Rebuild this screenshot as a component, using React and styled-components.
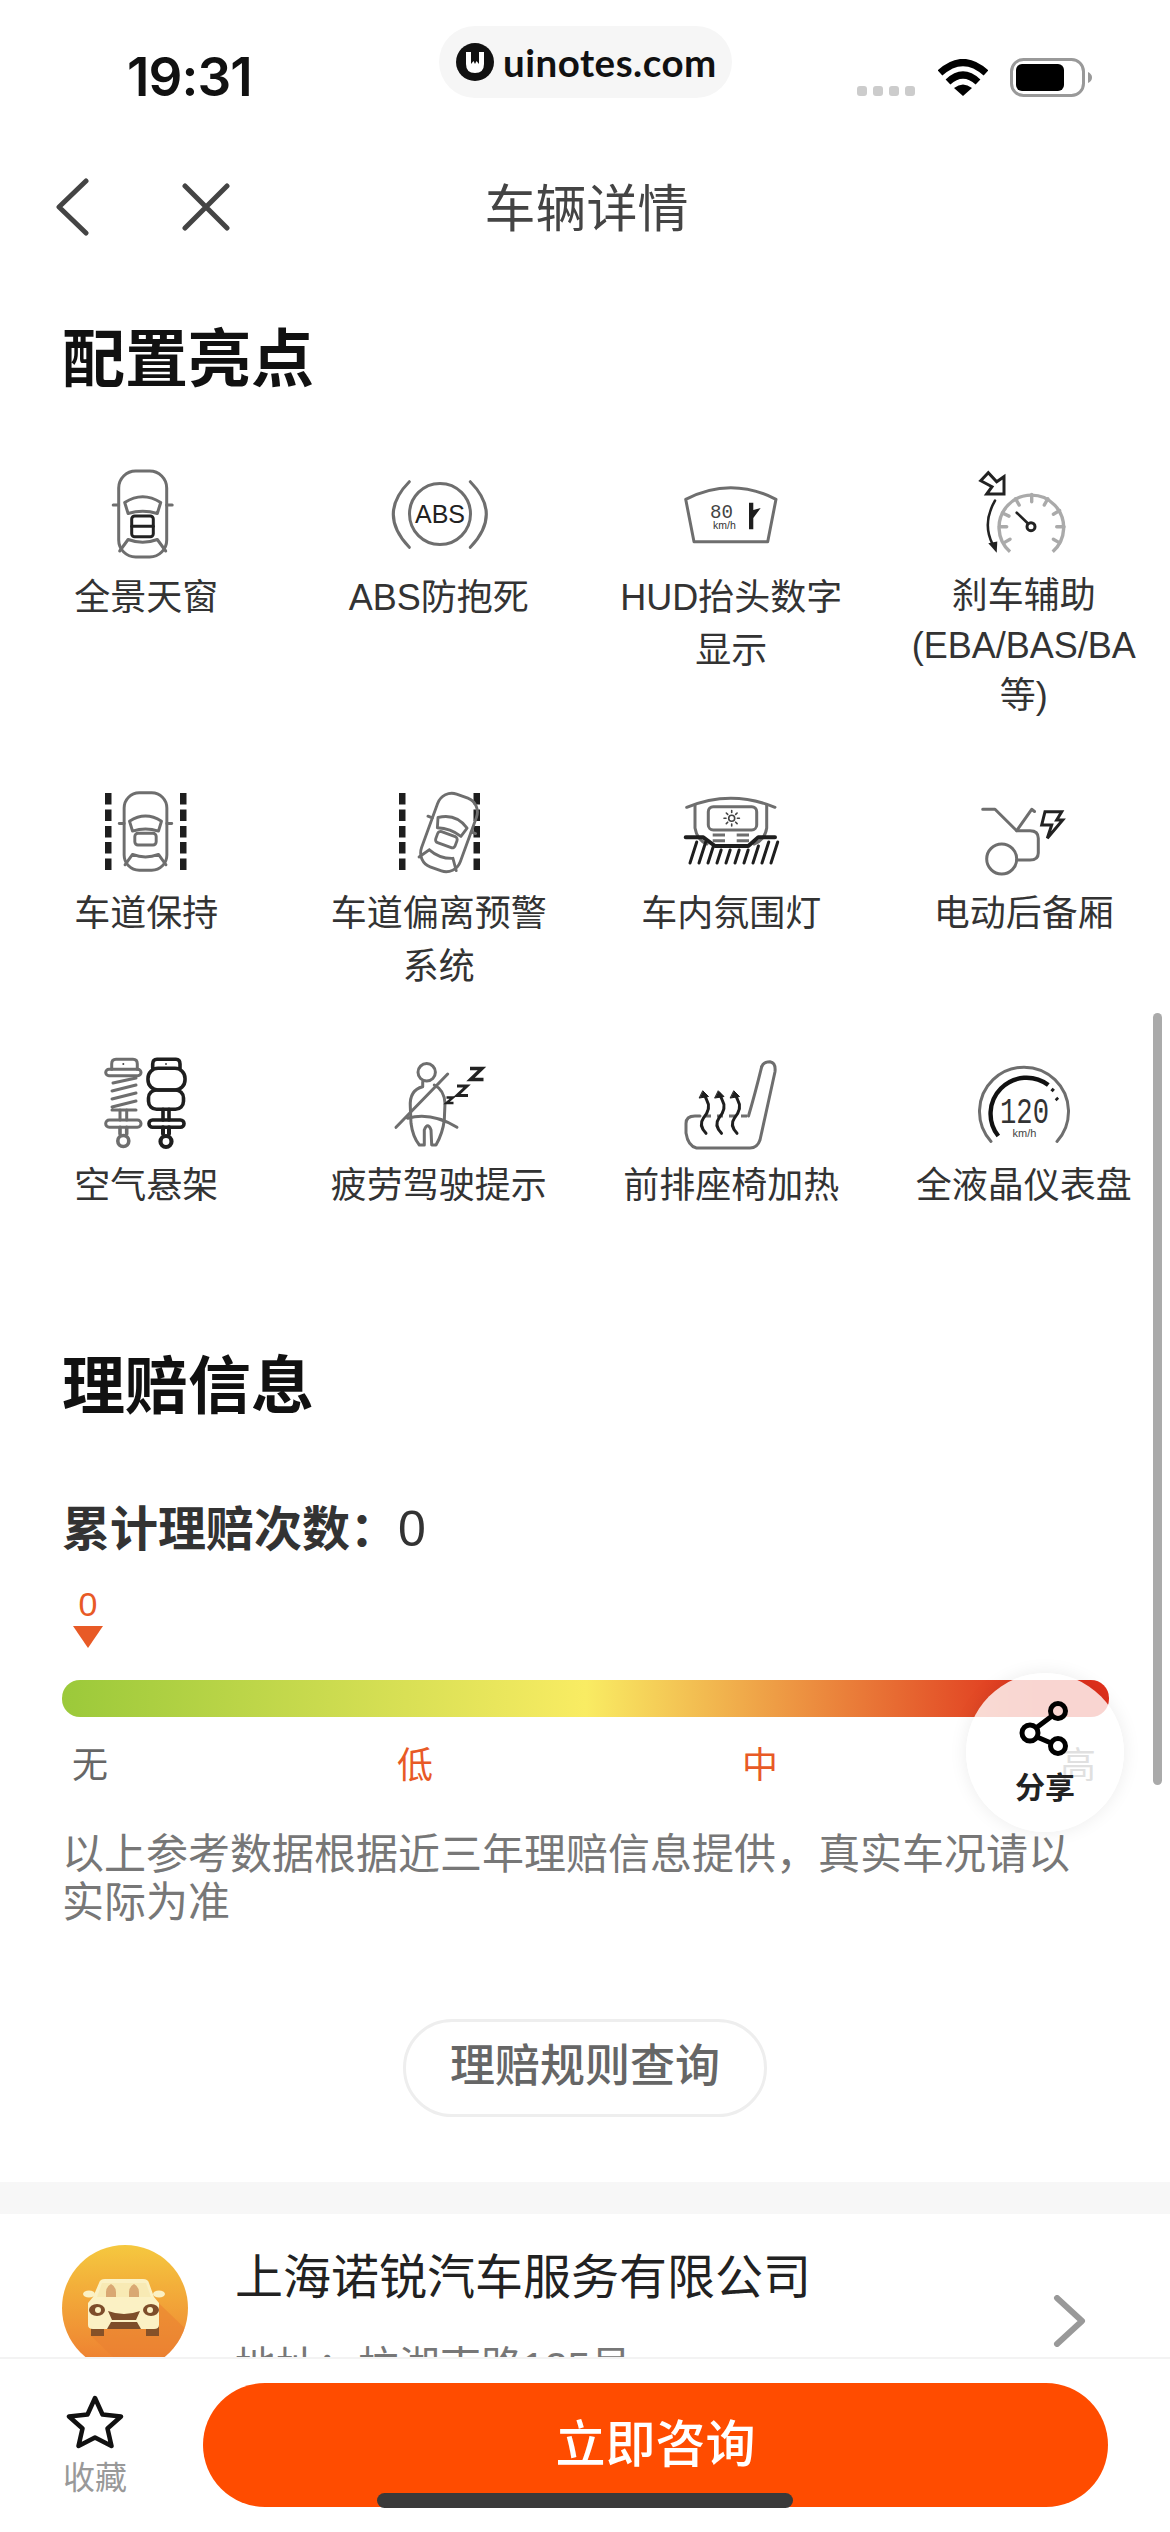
import React from "react";
import styled, { createGlobalStyle } from "styled-components";

const SANS = `"Liberation Sans", "Noto Sans CJK SC", sans-serif`;
const GRAY = "#6e6e6e";
const DARK = "#222222";
const ORANGE = "#e85a26";

const Global = createGlobalStyle`
  html, body { margin: 0; padding: 0; background: #fff; }
  body { font-family: ${SANS}; }
  * { box-sizing: border-box; }
`;

const Page = styled.div`
  position: relative;
  width: 1170px;
  height: 2532px;
  overflow: hidden;
  background: #fff;
  color: #333;
`;

/* status bar */
const StatusBar = styled.div`
  display: flex;
  align-items: flex-start;
  height: 150px;
  padding-left: 127px;
`;
const Time = styled.div`
  width: 126px;
  margin-top: 50px;
  font: 600 53px/54px Inter, sans-serif;
  letter-spacing: -0.9px;
  white-space: nowrap;
  color: #111;
`;
const Pill = styled.div`
  display: flex;
  align-items: center;
  gap: 9px;
  width: 293px;
  height: 72px;
  margin: 26px 0 0 186px;
  padding-left: 17px;
  border-radius: 36px;
  background: #f6f6f6;
`;
const PillText = styled.span`
  font: 700 38.5px/40px Lato, sans-serif;
  letter-spacing: 0.5px;
  color: #111;
`;
const Signal = styled.div`
  display: flex;
  gap: 6px;
  margin: 86px 0 0 125px;
`;
const SignalDot = styled.i`
  display: block;
  width: 10px;
  height: 10px;
  border-radius: 3px;
  background: #cccccc;
`;
const Wifi = styled.svg`
  margin: 59px 0 0 23px;
`;
const Battery = styled.svg`
  margin: 58px 0 0 22px;
`;

/* nav */
const NavBar = styled.div`
  display: grid;
  grid-template-columns: 1fr auto 1fr;
  align-items: center;
  height: 114px;
`;
const NavLeft = styled.div`
  display: flex;
  align-items: center;
  gap: 92px;
  padding-left: 54px;
`;
const NavTitle = styled.div`
  padding: 5px 0 0 3px;
  font-size: 51px;
  line-height: 60px;
  color: #444;
`;

/* sections */
const SectionTitle = styled.h2`
  margin: ${(p) => p.$top}px 0 0 62px;
  font-size: 63px;
  line-height: 80px;
  font-weight: 700;
  color: #111;
`;
const FeatureGrid = styled.div`
  display: grid;
  grid-template-columns: repeat(4, 1fr);
  row-gap: 65px;
  margin-top: 71px;
`;
const Feature = styled.div`
  display: flex;
  flex-direction: column;
  align-items: center;
`;
const IconSvg = styled.svg`
  display: block;
  overflow: visible;
  fill: none;
  stroke: ${GRAY};
  stroke-width: 3;
  stroke-linecap: round;
  stroke-linejoin: round;
`;
const FeatureLabel = styled.div`
  width: 240px;
  margin-top: 11px;
  font-size: 36px;
  line-height: ${(p) => (p.$tight ? 50 : 53)}px;
  text-align: center;
  color: #333;
`;
const Count = styled.div`
  margin: 73px 0 0 62px;
  font-size: 48px;
  line-height: 60px;
  font-weight: 700;
  color: #333;
`;
const CountValue = styled.span`
  font-size: 50px;
  font-weight: 400;
`;
const Marker = styled.div`
  display: flex;
  flex-direction: column;
  align-items: center;
  width: 52px;
  margin: 24px 0 0 62px;
`;
const MarkerValue = styled.div`
  font-size: 34px;
  line-height: 40px;
  color: ${ORANGE};
`;
const MarkerArrow = styled.div`
  width: 0;
  height: 0;
  margin-top: 2px;
  border-left: 15px solid transparent;
  border-right: 15px solid transparent;
  border-top: 22px solid ${ORANGE};
`;
const Bar = styled.div`
  width: 1047px;
  height: 37px;
  margin: 32px 0 0 62px;
  border-radius: 18px;
  background: linear-gradient(90deg, #9bc93a 0%, #f9ec63 50%, #df301c 93%, #df301c 100%);
`;
const Levels = styled.div`
  display: grid;
  grid-template-columns: 325px 345px 318px auto;
  margin: 29px 0 0 72px;
`;
const Level = styled.span`
  font-size: 36px;
  line-height: 40px;
  color: ${(p) => (p.$hot ? ORANGE : "#666")};
`;
const Note = styled.p`
  width: 1040px;
  margin: 45px 0 0 62px;
  font-size: 42px;
  line-height: 48px;
  color: #777;
`;
const RuleButton = styled.div`
  width: 364px;
  height: 98px;
  margin: 92px auto 0;
  border: 3px solid #eeeeee;
  border-radius: 49px;
  font-size: 45px;
  font-weight: 500;
  line-height: 90px;
  text-align: center;
  color: #666;
`;
const Band = styled.div`
  height: 32px;
  margin-top: 65px;
  background: #f7f7f7;
`;

/* shop */
const ShopRow = styled.div`
  display: flex;
  align-items: flex-start;
  padding: 31px 0 0 62px;
`;
const ShopText = styled.div`
  width: 818px;
  margin: 3px 0 0 47px;
`;
const ShopName = styled.div`
  font-size: 48px;
  line-height: 60px;
  color: #222;
`;
const ShopAddress = styled.div`
  margin-top: 34px;
  font-size: 41px;
  line-height: 50px;
  color: #777;
`;
const ShopChevron = styled.svg`
  margin-top: 50px;
`;

/* footer */
const Footer = styled.div`
  position: absolute;
  left: 0;
  right: 0;
  bottom: 0;
  display: flex;
  align-items: flex-start;
  height: 175px;
  border-top: 2px solid #f3f3f3;
  background: #fff;
`;
const Favorite = styled.div`
  display: flex;
  flex-direction: column;
  align-items: center;
  width: 66px;
  margin: 36px 0 0 62px;
`;
const FavoriteLabel = styled.div`
  margin-top: 9px;
  font-size: 32px;
  line-height: 40px;
  color: #999;
`;
const Consult = styled.div`
  width: 905px;
  height: 124px;
  margin: 24px 0 0 75px;
  border-radius: 62px;
  background: #ff4c00;
  font-size: 50px;
  line-height: 124px;
  font-weight: 500;
  text-align: center;
  color: #fff;
`;
const HomeBar = styled.div`
  position: absolute;
  left: 377px;
  top: 2493px;
  width: 416px;
  height: 15px;
  border-radius: 8px;
  background: #3a3a3a;
`;
const ScrollThumb = styled.div`
  position: absolute;
  left: 1153px;
  top: 1013px;
  width: 9px;
  height: 772px;
  border-radius: 5px;
  background: #aaaaaa;
`;
const ShareFab = styled.div`
  position: absolute;
  left: 966px;
  top: 1673px;
  display: flex;
  flex-direction: column;
  align-items: center;
  width: 158px;
  height: 159px;
  padding-top: 27px;
  border-radius: 50%;
  background: rgba(255, 255, 255, 0.8);
  box-shadow: 0 0 18px rgba(0, 0, 0, 0.08);
`;
const ShareLabel = styled.div`
  margin-top: 14px;
  font-size: 30px;
  line-height: 36px;
  font-weight: 700;
  color: #222;
`;

/* icon pieces */
const Icon = ({ children }) => (
  <IconSvg width="100" height="90" viewBox="0 0 100 90">
    {children}
  </IconSvg>
);

const CarBody = () => (
  <>
    <rect x="-24" y="-43" width="48" height="86" rx="17" />
    <path d="M-24 -9H-29.5M24 -9H29.5" />
    <path d="M-18 -11.5Q0 -23 18 -11.5L14.6 -.5Q0 -5 -14.6 -.5Z" />
    <path d="M-14.6 25.5Q0 31 14.6 25.5M-14.6 25.5L-23 37M14.6 25.5L23 37" />
  </>
);

const LaneDashes = ({ x }) => (
  <g stroke="none" fill="#1e1e1e">
    {[7, 23.5, 40, 56, 72.5].map((y) => (
      <rect key={y} x={x} y={y} width="6.5" height="11.5" />
    ))}
  </g>
);

const SunroofIcon = () => (
  <Icon>
    <g transform="translate(46.7 44)">
      <CarBody />
    </g>
    <g stroke={DARK}>
      <rect x="35.7" y="46" width="21.6" height="20.7" rx="3" />
      <path d="M35.7 56.3H57.3" />
    </g>
  </Icon>
);

const AbsIcon = () => (
  <Icon>
    <circle cx="51" cy="44" r="30.5" />
    <path d="M20.3 11.7Q-11.7 44 20.3 77.3M81.3 11.7Q113.3 44 81.3 77.3" />
    <text x="51" y="53" textAnchor="middle" fontSize="25" fill={DARK} stroke="none" fontFamily={SANS}>
      ABS
    </text>
  </Icon>
);

const HudIcon = () => (
  <Icon>
    <path d="M4.7 29.3Q49.7 6 95 29.3L86.7 71.7H13Z" />
    <text x="29" y="47.5" textLength="23" lengthAdjust="spacingAndGlyphs" fontSize="21" fill="#444" stroke="none" fontFamily="Liberation Mono, monospace">
      80
    </text>
    <text x="43.5" y="59" textAnchor="middle" fontSize="10.5" fill="#333" stroke="none" fontFamily={SANS}>
      km/h
    </text>
    <path d="M68 32.7H72.3V40L79.7 38L72.3 48V59.3H68Z" fill="#1e1e1e" stroke="none" />
  </Icon>
);

const gaugeTicks = [210, 180, 155, 120, 90, 60, 30, 0, -30].map((d) => {
  const a = (d * Math.PI) / 180;
  return {
    x1: 57.7 + 32.3 * Math.cos(a),
    y1: 56.7 - 32.3 * Math.sin(a),
    x2: 57.7 + 25 * Math.cos(a),
    y2: 56.7 - 25 * Math.sin(a),
    d,
  };
});

const BrakeIcon = () => (
  <Icon>
    <g stroke="#aaaaaa" strokeWidth="3.4">
      <path d="M36 81.7A32.3 32.3 0 1 1 78.7 81.7" strokeLinecap="butt" />
      {gaugeTicks.map((t) => (
        <line key={t.d} x1={t.x1} y1={t.y1} x2={t.x2} y2={t.y2} />
      ))}
    </g>
    <g stroke={DARK}>
      <path d="M6.7 10.7L14.3 2.7L22.7 11.7L30 6.7V24H12.7L18 16.7Z" strokeLinejoin="miter" />
      <path d="M42.7 42.7L53.7 53.3" strokeWidth="2.6" />
      <circle cx="57" cy="56.7" r="4" />
      <path d="M21 30.7Q8 53.3 18.5 74" strokeWidth="2.6" />
      <path d="M14.3 73.3L23.3 71.5L22.7 82.7Z" fill={DARK} stroke="none" />
    </g>
  </Icon>
);

const LaneKeepIcon = () => (
  <Icon>
    <LaneDashes x="9" />
    <LaneDashes x="84" />
    <g transform="translate(49.5 45.5) scale(.89 .9)" strokeWidth="3.3">
      <CarBody />
      <rect x="-12" y="2" width="24" height="13" rx="3.5" />
    </g>
  </Icon>
);

const LaneDepartIcon = () => (
  <Icon>
    <LaneDashes x="10" />
    <LaneDashes x="84.5" />
    <g transform="translate(60 46.5) rotate(20) scale(.86 .9)" strokeWidth="3.3">
      <CarBody />
      <rect x="-12" y="2" width="24" height="13" rx="3.5" />
    </g>
  </Icon>
);

const hatch = [9, 18, 27, 36, 45, 54, 63, 72, 81, 90];
const AmbientIcon = () => (
  <Icon>
    <path d="M5.7 21.3Q49.7 3 94 21.3" />
    <path d="M14 19V42Q16 54 26 58M85.7 19V42Q84 54 73 58" />
    <rect x="27.3" y="20.7" width="48.4" height="23.3" rx="5" />
    <circle cx="50.7" cy="32.3" r="3" strokeWidth="1.6" stroke="#444" />
    <g stroke="#444" strokeWidth="1.6">
      <path d="M50.7 24.5V26.5M50.7 38V40M43 32.3H45M56.4 32.3H58.4M45.3 27L46.7 28.4M56.1 27L54.7 28.4M45.3 37.6L46.7 36.2M56.1 37.6L54.7 36.2" />
    </g>
    <path d="M31.7 49H44M31.7 54.7H44M55.7 49H68M55.7 54.7H68" strokeLinecap="butt" />
    <g stroke="#1e1e1e">
      <path d="M4.7 51.3H22.3L34 60H67.3L77.3 51.3H94" strokeWidth="4" />
      {hatch.map((x, i) => {
        const top = i < 2 || i > 7 ? 56 : i < 3 || i > 6 ? 60 : 64;
        return <line key={x} x1={x} y1="77" x2={x + (77 - top) * 0.32} y2={top} />;
      })}
    </g>
  </Icon>
);

const TrunkIcon = () => (
  <Icon>
    <path d="M8.7 23.3H21L42.7 44.7H56Q64.3 44.7 64.3 52.3V67Q64.3 74 56 74H42.7" />
    <path d="M42.7 44.7L57.7 23.3L60.5 25.5" />
    <circle cx="27.7" cy="73" r="15" />
    <path d="M71 25.7H87.7L82.7 34H88.7L73.3 52.3L77.7 39H67.7Z" stroke={DARK} strokeLinejoin="miter" />
  </Icon>
);

const SuspensionIcon = () => (
  <Icon>
    <g>
      <path d="M15.7 11.3V6Q15.7 1.3 20 1.3H37Q41.3 1.3 41.3 6V11.3" />
      <rect x="9.7" y="11.3" width="35.3" height="6.4" rx="3.2" />
      <path d="M17 25L40 20M16 33L40 27M16 41L40 35M16 49L40 43M16 52H40" />
      <path d="M24 52V62M30.7 52V62" />
      <rect x="9.7" y="62" width="35.3" height="7.3" rx="3.6" />
      <path d="M24 69.3V76M30.7 69.3V76" strokeWidth="3.6" />
      <circle cx="27.3" cy="83" r="5.5" strokeWidth="3.6" />
    </g>
    <g stroke="#1e1e1e" strokeWidth="3.6">
      <path d="M56.7 10.3V6Q56.7 1.3 61 1.3H80Q84 1.3 84 6V10.3" />
      <rect x="52" y="10.3" width="37" height="21.7" rx="10" />
      <rect x="52.5" y="32" width="35" height="19.3" rx="8" />
      <path d="M67 51.3V62M73 51.3V62" />
      <rect x="53" y="62" width="35" height="7.3" rx="3.6" />
      <path d="M67 69.3V76M73 69.3V76" strokeWidth="4" />
      <circle cx="70" cy="83.5" r="5.5" strokeWidth="4.2" />
    </g>
    <circle cx="27.3" cy="6" r="1" fill="#444" stroke="none" />
    <circle cx="70" cy="6" r="1" fill="#444" stroke="none" />
  </Icon>
);

const FatigueIcon = () => (
  <Icon>
    <circle cx="37.7" cy="14.3" r="8.7" />
    <path d="M33.7 23.7V28.7Q20.3 32 21.3 48.7L22 65.3Q23.7 78.7 30.3 87H35.3V72Q38.7 63.7 42 72L42.7 87H47Q53.7 75.3 55.3 62L56 45.3Q55.3 32 45.3 27" />
    <path d="M7 69.3L58.7 16M18.7 60.3Q42 53.7 68 69.3" />
    <g stroke={DARK} strokeLinejoin="miter" strokeLinecap="butt">
      <path d="M81 10.5H93L81.5 21.5H94.5" strokeWidth="3.4" />
      <path d="M68 28H78L68 37.5H79" strokeWidth="3" />
      <path d="M57.5 39.5H64L57.5 45H64.5" strokeWidth="2.4" />
    </g>
  </Icon>
);

const wave = "M25 75.3Q17.3 67 22.3 60.3Q30.7 50.3 25.7 42Q24.5 39 23 36";
const SeatIcon = () => (
  <Icon>
    <path d="M80.7 8.7Q82.3 3.7 89 3.7Q95 4.7 94 13.7L79 82Q76.3 90 69 90H15.5Q7 88 5 75V65.5Q5 58 14 58H19" />
    <path d="M67.5 58Q73.5 38 80.7 8.7" />
    <path d="M24 58H68" strokeDasharray="6 6" strokeLinecap="butt" />
    <g stroke="#1e1e1e">
      {[0, 15.5, 31].map((x) => (
        <g key={x} transform={`translate(${x} 0)`}>
          <path d={wave} strokeWidth="3" />
          <path d="M22 33L27.5 38.5L18.5 40Z" fill="#1e1e1e" strokeWidth="1" />
        </g>
      ))}
    </g>
  </Icon>
);

const SpeedoIcon = () => (
  <Icon>
    <path d="M17 83.5A44.5 44.5 0 1 1 83 83.5" strokeWidth="3" />
    <path d="M24.3 78A36 36 0 0 1 74.3 27" stroke="#111" strokeWidth="4.4" strokeLinecap="butt" />
    <path d="M77.5 31L79.8 33M82 40L83.8 42" stroke="#1e1e1e" strokeWidth="3.4" strokeLinecap="butt" />
    <text x="26" y="65" textLength="49" lengthAdjust="spacingAndGlyphs" fontSize="36" fill="#333" stroke="none" fontFamily="Liberation Mono, monospace">
      120
    </text>
    <text x="50.5" y="79" textAnchor="middle" fontSize="11" fill="#444" stroke="none" fontFamily={SANS}>
      km/h
    </text>
  </Icon>
);

const features = [
  { icon: SunroofIcon, label: "全景天窗" },
  { icon: AbsIcon, label: "ABS防抱死" },
  { icon: HudIcon, label: "HUD抬头数字显示" },
  { icon: BrakeIcon, label: ["刹车辅助", "(EBA/BAS/BA", "等)"], tight: true },
  { icon: LaneKeepIcon, label: "车道保持" },
  { icon: LaneDepartIcon, label: "车道偏离预警系统" },
  { icon: AmbientIcon, label: "车内氛围灯" },
  { icon: TrunkIcon, label: "电动后备厢" },
  { icon: SuspensionIcon, label: "空气悬架" },
  { icon: FatigueIcon, label: "疲劳驾驶提示" },
  { icon: SeatIcon, label: "前排座椅加热" },
  { icon: SpeedoIcon, label: "全液晶仪表盘" },
];

const AvatarImage = () => (
  <svg width="126" height="126" viewBox="0 0 126 126">
    <defs>
      <linearGradient id="avatarBg" x1="0" y1="0" x2="0" y2="1">
        <stop offset="0" stopColor="#f5c83f" />
        <stop offset="1" stopColor="#ee7b30" />
      </linearGradient>
      <clipPath id="avatarClip">
        <circle cx="63" cy="63" r="63" />
      </clipPath>
    </defs>
    <g clipPath="url(#avatarClip)">
      <rect width="126" height="126" fill="url(#avatarBg)" />
      <path d="M78 40L130 90V130H70L28 90Z" fill="#ea7f32" opacity=".55" />
      <path d="M29 80H42V91H29ZM84 80H97V91H84Z" fill="#855128" />
      <path d="M37 38Q38 34 43 34H81Q86 34 87 38L92 52L97 58V80Q97 84 92 84H31Q26 84 26 80V58L31 52Z" fill="#fbf1c4" />
      <ellipse cx="27" cy="49" rx="6" ry="3.5" fill="#fbf1c4" />
      <ellipse cx="97" cy="49" rx="6" ry="3.5" fill="#fbf1c4" />
      <path d="M40 38H84L89 52H35Z" fill="#f8eab4" />
      <path d="M44 52V47Q44 42 49 39Q54 42 54 47V52ZM67 52V47Q67 42 72 39Q77 42 77 47V52Z" fill="#d9a873" />
      <ellipse cx="35" cy="65" rx="8" ry="6" fill="#7d4d2a" />
      <ellipse cx="89" cy="65" rx="8" ry="6" fill="#7d4d2a" />
      <circle cx="36" cy="65" r="3" fill="#fbf1c4" />
      <circle cx="88" cy="65" r="3" fill="#fbf1c4" />
      <path d="M46 66Q62 72 78 66L74 75H50Z" fill="#7d4d2a" />
      <path d="M45 84L49 77H75L79 84Z" fill="#7d4d2a" />
    </g>
  </svg>
);

export default function App() {
  return (
    <Page>
      <Global />
      <StatusBar>
        <Time>19:31</Time>
        <Pill>
          <svg width="38" height="38" viewBox="0 0 38 38">
            <circle cx="19" cy="19" r="19" fill="#111" />
            <path d="M10 9H15V21L17.5 18L19 21L20.5 18L23 21V9H28V21Q28 30 19 30Q10 30 10 21Z" fill="#fff" />
          </svg>
          <PillText>uinotes.com</PillText>
        </Pill>
        <Signal>
          {[0, 1, 2, 3].map((i) => (
            <SignalDot key={i} />
          ))}
        </Signal>
        <Wifi width="50" height="37" viewBox="0 0 50 37" fill="none">
          <path d="M2 14Q25 -7 48 14" stroke="#000" strokeWidth="7" />
          <path d="M10 23Q25 9 40 23" stroke="#000" strokeWidth="7" />
          <path d="M16 29Q25 22 34 29L25 37Z" fill="#000" />
        </Wifi>
        <Battery width="82" height="39" viewBox="0 0 82 39" fill="none">
          <rect x="1.5" y="1.5" width="72" height="36" rx="12" stroke="#999" strokeWidth="3" />
          <rect x="6" y="6" width="48" height="27" rx="6" fill="#000" />
          <path d="M78 14Q82 16 82 19.5Q82 23 78 25Z" fill="#999" />
        </Battery>
      </StatusBar>

      <NavBar>
        <NavLeft>
          <svg width="36" height="58" viewBox="0 0 36 58" fill="none" stroke="#444" strokeWidth="5" strokeLinecap="round" strokeLinejoin="round">
            <path d="M32 3L5 29L32 55" />
          </svg>
          <svg width="48" height="48" viewBox="0 0 48 48" fill="none" stroke="#444" strokeWidth="5" strokeLinecap="round">
            <path d="M3 3L45 45M45 3L3 45" />
          </svg>
        </NavLeft>
        <NavTitle>车辆详情</NavTitle>
      </NavBar>

      <SectionTitle $top={55}>配置亮点</SectionTitle>
      <FeatureGrid>
        {features.map(({ icon: FeatureIcon, label, tight }, i) => (
          <Feature key={i}>
            <FeatureIcon />
            <FeatureLabel $tight={tight}>
              {Array.isArray(label)
                ? label.map((line) => <div key={line}>{line}</div>)
                : label}
            </FeatureLabel>
          </Feature>
        ))}
      </FeatureGrid>

      <SectionTitle $top={134}>理赔信息</SectionTitle>
      <Count>
        累计理赔次数：<CountValue>0</CountValue>
      </Count>
      <Marker>
        <MarkerValue>0</MarkerValue>
        <MarkerArrow />
      </Marker>
      <Bar />
      <Levels>
        <Level>无</Level>
        <Level $hot>低</Level>
        <Level $hot>中</Level>
        <Level>高</Level>
      </Levels>
      <Note>以上参考数据根据近三年理赔信息提供，真实车况请以实际为准</Note>
      <RuleButton>理赔规则查询</RuleButton>
      <Band />

      <ShopRow>
        <AvatarImage />
        <ShopText>
          <ShopName>上海诺锐汽车服务有限公司</ShopName>
          <ShopAddress>地址：杭湘南路125号</ShopAddress>
        </ShopText>
        <ShopChevron width="34" height="52" viewBox="0 0 34 52" fill="none" stroke="#999" strokeWidth="6" strokeLinecap="round" strokeLinejoin="round">
          <path d="M4 3L29 26L4 49" />
        </ShopChevron>
      </ShopRow>

      <ScrollThumb />
      <ShareFab>
        <svg width="58" height="56" viewBox="0 0 58 56" fill="none" stroke="#000" strokeWidth="5">
          <circle cx="42" cy="11" r="7.5" />
          <circle cx="14" cy="33" r="8" />
          <circle cx="42" cy="46" r="7.5" />
          <path d="M20 28L36 16M21 37L35 43" />
        </svg>
        <ShareLabel>分享</ShareLabel>
      </ShareFab>

      <Footer>
        <Favorite>
          <svg width="58" height="54" viewBox="0 0 58 54" fill="none" stroke="#111" strokeWidth="4.5" strokeLinejoin="round">
            <path d="M29 3L36.5 19.5L55 21.5L41.5 33.5L45.5 51L29 42.5L12.5 51L16.5 33.5L3 21.5L21.5 19.5Z" />
          </svg>
          <FavoriteLabel>收藏</FavoriteLabel>
        </Favorite>
        <Consult>立即咨询</Consult>
      </Footer>
      <HomeBar />
    </Page>
  );
}
